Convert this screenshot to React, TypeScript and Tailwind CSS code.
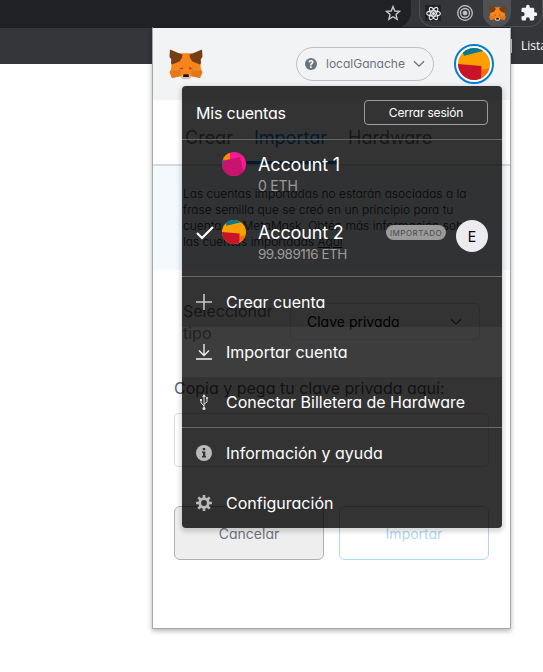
import React from "react";

function Fox({ className }: { className: string }) {
  return (
    <svg className={className} viewBox="0 0 34 32" preserveAspectRatio="none" aria-hidden="true">
      <path d="M2 8 L11 4.500 H23 L32 8 L31.500 20 L33 24 L31 30 L23 28 L20 31 H14 L11 28 L3 30 L1 24 L2.500 20 Z" fill="#f6851b" />
      <path d="M4 17 L9 20.500 L12 22 L11 28 L3 30 L0.500 24 Z M30 17 L25 20.500 L22 22 L23 28 L31 30 L33.500 24 Z" fill="#e4761b" />
      <path d="M4.500 15 L10 14.500 L12 20 L9 22.500 L1.500 22.500 Z M29.500 15 L24 14.500 L22 20 L25 22.500 L32.500 22.500 Z" fill="#f6851b" />
      <path d="M1 0.500 L13.500 6 L13 9 L10.500 13 L3 16 L2 14.500 L2.500 11 L0.500 8 Z M33 0.500 L20.500 6 L21 9 L23.500 13 L31 16 L32 14.500 L31.500 11 L33.500 8 Z" fill="#763d16" />
      <path d="M10 20 L14 18.300 L13.800 21.300 Z M24 20 L20 18.300 L20.200 21.300 Z" fill="#cd6116" />
      <path d="M11 20 L13.800 21 L13 19.300 Z M23 20 L20.200 21 L21 19.300 Z" fill="#7a4a2a" />
      <path d="M11.500 28 L15 26.500 H19 L22.500 28 L20 31.300 H14 Z" fill="#d7c1b3" />
      <path d="M14.500 26 H19.500 L20 29 H14 Z" fill="#161616" />
    </svg>
  );
}

function WarmAvatar({ className }: { className: string }) {
  return (
    <svg className={className} viewBox="0 0 32 32" aria-hidden="true">
      <defs>
        <clipPath id="warm"><circle cx="16" cy="16" r="16" /></clipPath>
      </defs>
      <g clipPath="url(#warm)">
        <path d="M0 0H32V32H0Z" fill="#fca000" />
        <path d="M4 0H32L25 3L6 7.700L4.500 4Z" fill="#077890" />
        <path d="M23 22L32 20V32H22Z" fill="#fc6a0d" />
        <path d="M0 16L23.500 18L23 32H0Z" fill="#c8142b" />
      </g>
    </svg>
  );
}

function PinkAvatar() {
  return (
    <svg className="size-6 shrink-0" viewBox="0 0 24 24" aria-hidden="true">
      <defs>
        <clipPath id="pink"><circle cx="12" cy="12" r="12" /></clipPath>
      </defs>
      <g clipPath="url(#pink)">
        <path d="M0 0H24V24H0Z" fill="#fb1894" />
        <path d="M0 9L18 5L23 24H0Z" fill="#c8146f" />
        <path d="M0 0H8V7L0 9Z" fill="#fa8d00" />
        <path d="M0 8L3 7.500L0 12Z" fill="#077890" />
      </g>
    </svg>
  );
}

function Chevron({ className }: { className: string }) {
  return (
    <svg className={className} viewBox="0 0 12 8" fill="none" stroke="currentColor" strokeWidth="1.300" aria-hidden="true">
      <path d="M1 1.200L6 6.200L11 1.200" />
    </svg>
  );
}

function BrowserBar() {
  return (
    <div className="w-full">
      <div className="flex h-7 w-full items-start bg-[#35363a]">
        <div className="flex h-7 w-[411px] justify-end rounded-br-2xl bg-[#202124] pr-[10px] pt-[5px]">
          <svg className="size-4" viewBox="0 0 16 16" fill="none" stroke="#c4c6c9" strokeWidth="1.400" aria-hidden="true">
            <path d="M8 1.600L9.800 6L14.600 6.400L11 9.500L12.100 14.200L8 11.700L3.900 14.200L5 9.500L1.400 6.400L6.200 6Z" />
          </svg>
        </div>
        <div className="ml-2 flex h-[27px] w-[124px] items-start rounded-b-[14px] border border-t-0 border-[#505155]">
          <div className="ml-[5px] mt-[5px] flex size-4 items-center justify-center bg-[#202124]">
            <svg className="size-[15px]" viewBox="0 0 16 16" fill="none" stroke="#e8eaed" strokeWidth="1.200" aria-hidden="true">
              <ellipse cx="8" cy="8" rx="7.300" ry="2.800" />
              <ellipse cx="8" cy="8" rx="7.300" ry="2.800" transform="rotate(60 8 8)" />
              <ellipse cx="8" cy="8" rx="7.300" ry="2.800" transform="rotate(120 8 8)" />
              <circle cx="8" cy="8" r="1" fill="#e8eaed" />
            </svg>
          </div>
          <svg className="ml-4 mt-[5px] size-4" viewBox="0 0 16 16" fill="none" stroke="#c4c4c4" aria-hidden="true">
            <circle cx="8" cy="8" r="7.300" strokeWidth="1.300" />
            <circle cx="8" cy="8" r="4.500" strokeWidth="1.300" />
            <circle cx="8" cy="8" r="1.900" fill="#c4c4c4" />
          </svg>
          <div className="ml-[10px] flex h-[27px] w-7 justify-center rounded-b-full bg-[#505155] pt-[5px]">
            <Fox className="h-4 w-[17px]" />
          </div>
          <svg className="ml-[9px] mt-[4px] size-[18px] shrink-0" viewBox="0 0 24 24" fill="#f1f3f4" aria-hidden="true">
            <path d="M20.500 11H19V7c0-1.100-.9-2-2-2h-4V3.500a2.500 2.500 0 0 0-5 0V5H4c-1.100 0-2 .9-2 2v3.800h1.500a2.700 2.700 0 0 1 0 5.400H2V20c0 1.100.9 2 2 2h3.800v-1.500a2.700 2.700 0 0 1 5.400 0V22H17c1.100 0 2-.9 2-2v-4h1.500a2.500 2.500 0 0 0 0-5z" />
          </svg>
        </div>
      </div>
      <div className="flex h-9 w-full items-center bg-[#35363a]">
        <div className="ml-[503px] h-[14px] w-[9px] shrink-0 border border-l-0 border-[#d0d0d0]" />
        <span className="ml-[9px] whitespace-nowrap font-['Open_Sans',sans-serif] text-[12px] text-white">Lista</span>
      </div>
    </div>
  );
}

function ImportPage() {
  return (
    <div className="flex h-full flex-col">
      <header className="flex h-[72px] shrink-0 items-center bg-[#f2f3f4] pl-4 pr-4">
        <Fox className="h-[31px] w-[34px]" />
        <div className="ml-[93px] flex h-[34px] w-[138px] items-center rounded-full border border-[#bbc0c5] pl-2">
          <span className="flex size-3 items-center justify-center rounded-full bg-[#6a737d] text-[10px] font-bold leading-none text-white">?</span>
          <span className="ml-[9px] w-[80px] whitespace-nowrap text-[12px] text-[#6a737d]">localGanache</span>
          <Chevron className="ml-[7px] h-2 w-3 text-[#6a737d]" />
        </div>
        <div className="ml-5 flex size-10 shrink-0 items-center justify-center rounded-full border-2 border-[#037dd6] bg-white">
          <WarmAvatar className="size-8" />
        </div>
      </header>
      <nav className="flex h-[66px] shrink-0 items-end border-b-2 border-[#d6d9dc] pl-5 text-[18px] text-[#6a737d]">
        <span className="h-[40px] w-[69px] pl-3">Crear</span>
        <span className="h-[40px] w-[96px] border-b-[3px] border-[#037dd6] pl-3 text-[#037dd6]">Importar</span>
        <span className="h-[40px] pl-[10px]">Hardware</span>
      </nav>
      <p className="h-[104px] shrink-0 whitespace-nowrap bg-[#f4f9fd] pl-[30px] pt-5 text-[12px] font-light leading-4 text-[#24292e]">
        Las cuentas importadas no estarán asociadas a la<br />
        frase semilla que se creó en un principio para tu<br />
        cuenta de MetaMask. Obtén más información sobre<br />
        las cuentas importadas <u>Aquí</u>
      </p>
      <div className="flex flex-col px-[21px]">
        <div className="mt-[30px] flex h-[50px] pl-[9px]">
          <div className="w-[107px] text-[16px] leading-[22px] text-[#6a737d]">Seleccionar<br />tipo</div>
          <div className="mt-[3px] flex h-[37px] w-[190px] items-center justify-between rounded-[5px] border border-[#d6d9dc] pl-4 pr-[17px] text-[14px] text-black">
            Clave privada
            <Chevron className="h-2 w-3 text-[#555]" />
          </div>
        </div>
        <div className="mt-[26px] h-6 whitespace-nowrap text-[16px] leading-6 text-[#5b5d67]">Copia y pega tu clave privada aquí:</div>
        <div className="mt-[13px] h-[54px] w-[315px] rounded border border-[#d6d9dc]" />
        <div className="mt-[39px] flex gap-[15px] text-[14px]">
          <div className="flex h-[54px] w-[150px] items-center justify-center rounded-md border border-[#b0b1b3] bg-[#eeeeee] text-[#6a737d]">Cancelar</div>
          <div className="flex h-[54px] w-[150px] items-center justify-center rounded-md border border-[#b0d8f3] text-[#b0d8f3]">Importar</div>
        </div>
      </div>
    </div>
  );
}

function MenuItem({ label, active, children }: { label: string; active?: boolean; children: React.ReactNode }) {
  return (
    <div className={`flex h-[50px] shrink-0 items-center pl-[14px] ${active ? "bg-white/5" : ""}`}>
      <svg className="size-4 shrink-0" viewBox="0 0 16 16" fill="none" stroke="#f5f5f5" strokeWidth="1.300" aria-hidden="true">{children}</svg>
      <span className="ml-[14px] whitespace-nowrap text-[16px]">{label}</span>
    </div>
  );
}

function AccountMenu() {
  return (
    <div className="absolute left-[29px] top-[58px] flex h-[442px] w-80 flex-col overflow-hidden rounded bg-black/80 text-white shadow-[0_2px_4px_2px_rgba(0,0,0,0.15)]">
      <div className="flex h-[54px] shrink-0 items-center justify-between border-b border-[#676767] px-[14px]">
        <span className="text-[16px] tracking-[-0.2px]">Mis cuentas</span>
        <span className="flex h-[25px] w-[124px] items-center justify-center rounded-[4px] border border-[#9b9b9b] text-[12px] tracking-[-0.2px]">Cerrar sesión</span>
      </div>
      <div className="flex h-[137px] shrink-0 flex-col border-b border-[#676767]">
        <div className="flex h-[68px] pl-10 pt-3">
          <PinkAvatar />
          <div className="ml-3">
            <div className="h-6 text-[18px] leading-[26px] tracking-[-0.15px]">Account 1</div>
            <div className="mt-[2px] text-[14px] leading-4 tracking-[-0.2px] text-[#9b9b9b]">0 ETH</div>
          </div>
        </div>
        <div className="flex h-[68px] pl-[14px] pt-3">
          <svg className="mt-1 h-[18px] w-[18px]" viewBox="0 0 18 18" fill="none" stroke="white" strokeWidth="2.200" aria-hidden="true">
            <path d="M1 9L6 14L17 3" />
          </svg>
          <WarmAvatar className="ml-2 size-6" />
          <div className="ml-3 w-[128px] whitespace-nowrap">
            <div className="h-6 text-[18px] leading-[26px] tracking-[-0.15px]">Account 2</div>
            <div className="mt-[2px] text-[13.500px] leading-4 tracking-[-0.5px] text-[#9b9b9b]">99.989116 ETH</div>
          </div>
          <span className="mt-[5px] flex h-[15px] w-[60px] items-center justify-center rounded-full bg-[#9b9b9b] text-[8px] tracking-[0.500px] text-[#4b4b50]">IMPORTADO</span>
          <span className="ml-[10px] flex size-8 items-center justify-center rounded-full bg-[#ececf0] text-[14px] text-black">E</span>
        </div>
      </div>
      <MenuItem label="Crear cuenta">
        <path d="M8 0V16M0 8H16" stroke="#c6c6c6" strokeWidth="1.600" />
      </MenuItem>
      <MenuItem label="Importar cuenta" active>
        <path d="M8 0V11M3 6.500L8 11.500L13 6.500M0 15H16" />
      </MenuItem>
      <MenuItem label="Conectar Billetera de Hardware">
        <path d="M8 1V14M8 12L5 9V6M8 10L11 8V4" stroke="#dedede" strokeWidth="1" />
        <path d="M8 0L9.800 3H6.200Z M4 5H6V7H4Z" fill="#dedede" stroke="none" />
        <circle cx="11" cy="4" r="1.100" fill="#dedede" stroke="none" />
        <circle cx="8" cy="14.500" r="1.500" fill="#dedede" stroke="none" />
      </MenuItem>
      <div className="h-px shrink-0 bg-[#676767]" />
      <MenuItem label="Información y ayuda">
        <circle cx="8" cy="8" r="8" fill="#b9b9b9" stroke="none" />
        <path d="M6.800 3H9.200V5.300H6.800Z M6 6.500H9.300V11H10V12.500H6V11H7V8H6Z" fill="#333" stroke="none" />
      </MenuItem>
      <MenuItem label="Configuración">
        <circle cx="8" cy="8" r="4.300" stroke="#b9b9b9" strokeWidth="2.800" />
        <path d="M8 0V3M8 13V16M0 8H3M13 8H16M2.300 2.300L4.500 4.500M11.500 11.500L13.700 13.700M2.300 13.700L4.500 11.500M11.500 4.500L13.700 2.300" stroke="#b9b9b9" strokeWidth="2.600" />
      </MenuItem>
    </div>
  );
}

export default function App() {
  return (
    <div className="relative h-[672px] w-[543px] overflow-hidden bg-white font-['Inter','Lato',sans-serif] [font-feature-settings:'cv11']">
      <BrowserBar />
      <div className="absolute left-[152px] top-[27px] h-[602px] w-[359px] border border-[#a8a8a8] border-t-[#202124] bg-white shadow-[0_2px_5px_rgba(0,0,0,0.3)]">
        <ImportPage />
        <AccountMenu />
      </div>
    </div>
  );
}
